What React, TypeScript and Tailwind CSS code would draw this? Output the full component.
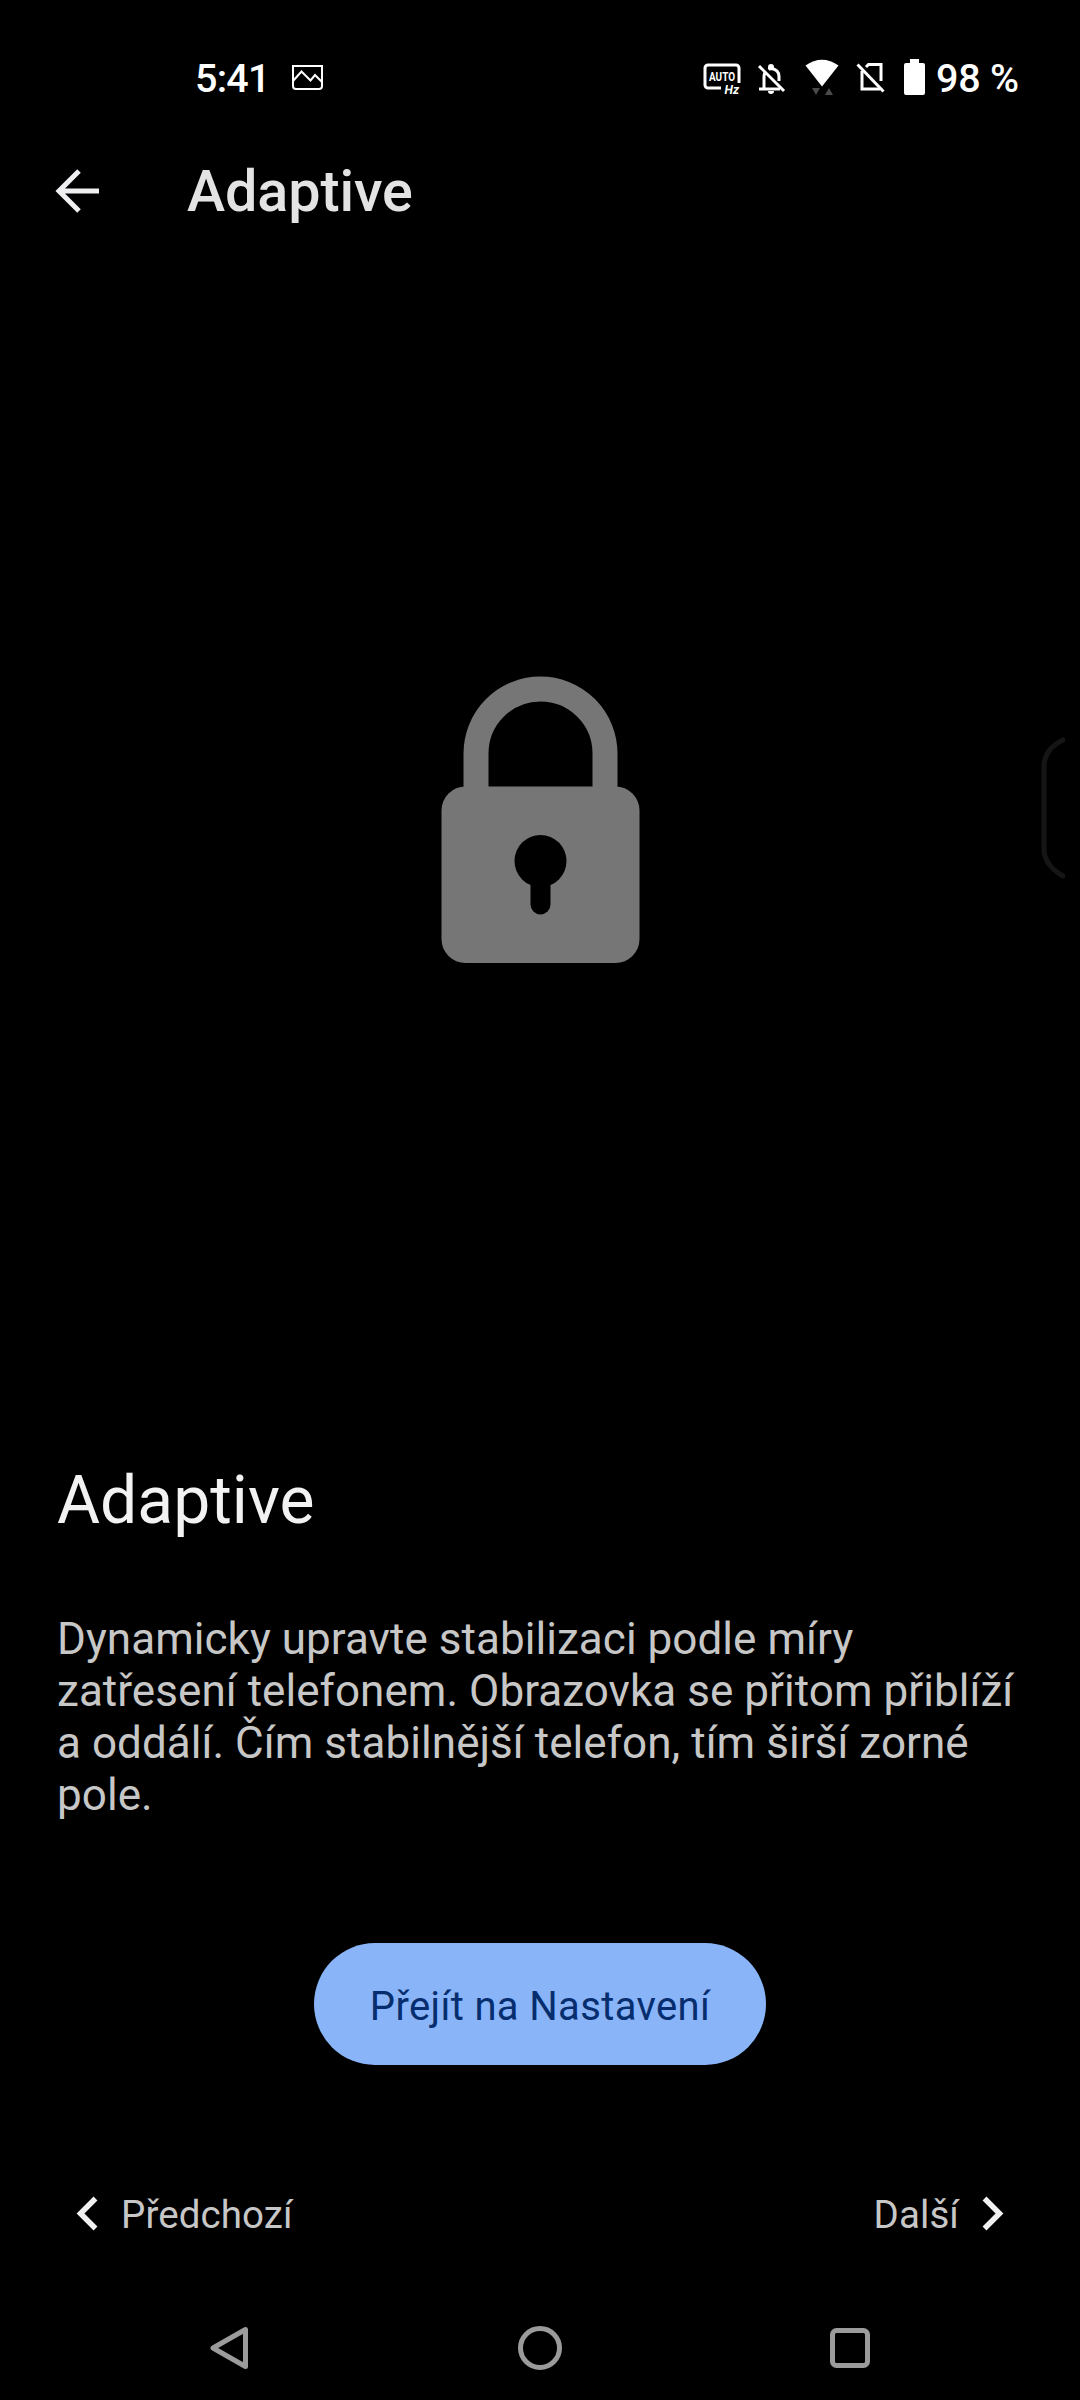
const StatusBar = () => {
  return (
    <div className="flex h-[156px] items-center pt-px pl-[195px] pr-[61px] text-[39.500px] font-medium text-white">
      <span className="w-[97px] leading-none tracking-[-0.8px]">5:41</span>
      <svg width="32" height="26" viewBox="0 0 32 26" fill="none" stroke="#fff" strokeWidth="2" className="mb-0.5">
        <path d="M1 1h29v20a3 3 0 0 1-3 3H4a3 3 0 0 1-3-3z" />
        <path d="M1 16l8.500-9.500 9 9 4.500-5.500 7 7" />
      </svg>

      <div className="ml-auto flex items-center">
        <svg width="44" height="40" viewBox="0 -2 44 40" fill="none" className="mr-[12px] overflow-visible">
          <path d="M20 27H7a3 3 0 0 1-3-3V7a3 3 0 0 1 3-3h28a3 3 0 0 1 3 3v15" stroke="#fff" strokeWidth="3" />
          <text x="21" y="20" textAnchor="middle" textLength="26" lengthAdjust="spacingAndGlyphs" fill="#fff" fontSize="13" fontWeight="700">AUTO</text>
          <text x="23.500" y="33" textLength="14.500" lengthAdjust="spacingAndGlyphs" fill="#fff" fontSize="12.500" fontWeight="700" fontStyle="italic">Hz</text>
        </svg>
        <svg width="30" height="32" viewBox="0 0 30 32" fill="none" stroke="#fff" strokeWidth="3" className="mr-[18px]">
          <path d="M2 3l25 25" />
          <path d="M7 25V13.500q0-2.500 1.500-4.500M11.500 6.500Q13 5.500 14 5.500q8 1 8 8v4.500M2 26h21" />
          <path d="M11 4a3 3 0 0 1 6 0v2h-6zM11 28h6a3 3 0 0 1-6 0z" fill="#fff" stroke="none" />
        </svg>
        <svg width="34" height="38" viewBox="0 0 34 38" className="mr-[17px] mb-0.5">
          <path d="M0.500 6.500Q17-5 33.500 6.500L17 27.500z" fill="#fff" />
          <path d="M7 29h8l-4 7zM20 36h8l-4-7z" fill="#4a4a4a" />
        </svg>
        <svg width="30" height="32" viewBox="0 0 30 32" fill="none" stroke="#fff" strokeWidth="3" className="mr-[18px] mb-0.5">
          <path d="M1.500 2.500l26 27" />
          <path d="M6 9v18h18M10 5l2.500-2.500H25V19" />
        </svg>
        <svg width="21" height="36" viewBox="0 0 21 36" className="mr-[11px] mb-1">
          <path d="M6 0h9v4h4a2 2 0 0 1 2 2v28a2 2 0 0 1-2 2H2a2 2 0 0 1-2-2V6a2 2 0 0 1 2-2h4z" fill="#fff" />
        </svg>
        <span className="leading-none tracking-[-0.2px]">98 %</span>
      </div>
    </div>
  );
};

const Header = () => {
  return (
    <header className="flex h-[70px] items-center pl-[55px]">
      <svg width="45" height="44" viewBox="0 0 45 44" fill="none" stroke="#efeff2" strokeWidth="5">
        <path d="M24 2L4 22l20 20M4 22h40" />
      </svg>
      <h1 className="ml-[87px] pt-0.5 text-[57.500px] leading-[70px] font-medium tracking-[-0.1px] text-[#e3e3e3]">Adaptive</h1>
    </header>
  );
};

const Lock = () => {
  return (
    <svg width="199" height="288" viewBox="-0.500 0 199 288">
      <path d="M34.500 120V77.500a64.500 64.500 0 0 1 129 0v43" fill="none" stroke="#767676" strokeWidth="25" />
      <rect y="110.500" width="198" height="176.500" rx="24" fill="#767676" />
      <circle cx="99" cy="185" r="26" fill="#000" />
      <path d="M99 190v38.500" stroke="#000" strokeWidth="20" strokeLinecap="round" />
    </svg>
  );
};

const NavBar = () => {
  return (
    <nav className="flex h-[104px] items-center justify-between px-[208px]">
      <svg width="44" height="46" viewBox="0 0 44 46" fill="none" stroke="#9b9b9b" strokeWidth="5" strokeLinejoin="round">
        <path d="M37.500 4.500v37L5 23z" />
      </svg>
      <svg width="44" height="44" viewBox="0 0 44 44" fill="none" stroke="#9b9b9b" strokeWidth="5">
        <circle cx="22" cy="22" r="19.500" />
      </svg>
      <svg width="44" height="44" viewBox="0 0 44 44" fill="none" stroke="#9b9b9b" strokeWidth="5">
        <rect x="4.500" y="4.500" width="35" height="35" rx="4" />
      </svg>
    </nav>
  );
};

export default function App() {
  return (
    <div className="relative flex h-[2400px] w-[1080px] flex-col overflow-hidden bg-black font-[Roboto,sans-serif]">
      <StatusBar />
      <Header />

      {/* edge panel handle */}
      <svg width="24" height="144" viewBox="0 0 24 144" fill="none" className="absolute top-[736px] left-[1041px]">
        <path d="M22 4Q3 13 3 31v82q0 16 19 27" stroke="#151515" strokeWidth="5" strokeLinecap="round" />
      </svg>

      <main className="flex flex-1 flex-col">
        <div className="flex h-[1236px] justify-center pt-[450px] pl-px">
          <Lock />
        </div>

        <h2 className="px-[57px] text-[66px] leading-[78px] text-[#f2f2f2]">Adaptive</h2>
        <p className="mt-[73px] px-[57px] text-[44px] leading-[52px] tracking-[0.05px] whitespace-nowrap text-[#c7c7c7]">
          Dynamicky upravte stabilizaci podle míry
          <br />
          zatřesení telefonem. Obrazovka se přitom přiblíží
          <br />
          a oddálí. Čím stabilnější telefon, tím širší zorné
          <br />
          pole.
        </p>

        <button className="mt-[122px] h-[122px] w-[452px] self-center rounded-full bg-[#8ab4f8] pt-1.5 text-[40px] tracking-[0.35px] text-[#062e6f]">
          Přejít na Nastavení
        </button>

        <div className="mt-[110px] flex h-20 items-center justify-between pr-[76px] pl-[76px] text-[38.5px] text-[#c7c7c7]">
          <button className="flex items-center">
            <svg width="22" height="36" viewBox="0 0 22 36" fill="none" stroke="#f2f2f2" strokeWidth="5.500" className="mb-1">
              <path d="M19.500 3.500L4.500 18.500l15 15" />
            </svg>
            <span className="ml-[23px] tracking-[0.1px]">Předchozí</span>
          </button>
          <button className="flex items-center">
            <span className="mr-[23px] tracking-[0.1px]">Další</span>
            <svg width="22" height="36" viewBox="0 0 22 36" fill="none" stroke="#f2f2f2" strokeWidth="5.500" className="mb-1">
              <path d="M2.500 3.500l15 15-15 15" />
            </svg>
          </button>
        </div>
      </main>

      <NavBar />
    </div>
  );
}
